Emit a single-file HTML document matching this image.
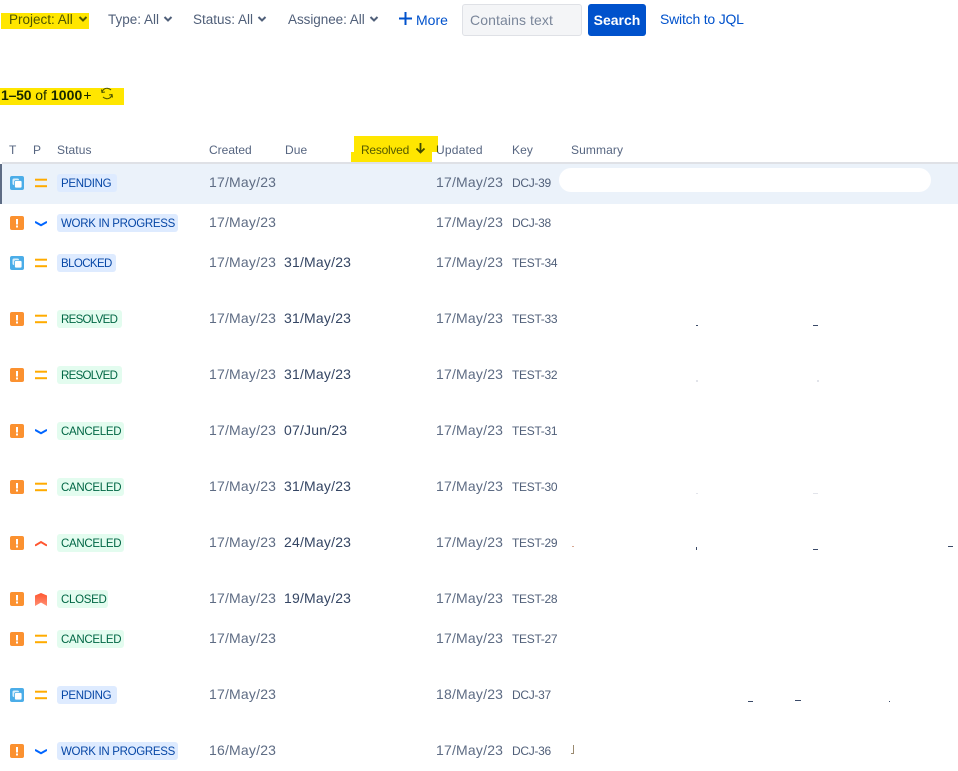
<!DOCTYPE html>
<html lang="en">
<head>
<meta charset="utf-8">
<title>Issues</title>
<style>
html,body{margin:0;padding:0;background:#fff}
body{position:relative;width:958px;height:765px;overflow:hidden;font-family:"Liberation Sans",sans-serif;font-size:14px;color:#172b4d}
.a{position:absolute;white-space:nowrap}
.f{font-size:13.5px;line-height:20px;top:10px;color:#505f79}
.chev{position:absolute;top:15px;width:10px;height:8px}
.th{position:absolute;top:142px;font-size:12px;line-height:16px;color:#566580;white-space:nowrap;letter-spacing:.1px}
.row{position:absolute;left:0;width:958px;height:40px}
.row svg{position:absolute}
.ty{left:10px;top:13px;width:14px;height:14px}
.pr{left:35px;top:14px;width:12px;height:14px}
.b{position:absolute;left:57px;top:11px;height:18px;line-height:20px;border-radius:3px;font-size:11.5px;padding:0 4px;white-space:nowrap;box-sizing:border-box;letter-spacing:-.3px}
.bl{background:#deebff;color:#0747a6}
.gr{background:#e3fcef;color:#006644}
.d{position:absolute;top:9px;line-height:20px;font-size:14px;color:#5e6c84;white-space:nowrap;letter-spacing:.2px}
.cr{left:209px}
.du{left:284px;color:#344563}
.up{left:436px}
.k{position:absolute;left:512px;top:10px;line-height:20px;font-size:12px;color:#505f79;white-space:nowrap;letter-spacing:-.3px}
.s{position:absolute;background:#3a4a68}
.hl{position:absolute;background:#ffe600;mix-blend-mode:multiply}
</style>
</head>
<body>
<svg width="0" height="0" style="position:absolute">
<defs>
<linearGradient id="tg" x1="0" y1="0" x2="0" y2="1"><stop offset="0" stop-color="#ff5630"/><stop offset="1" stop-color="#ff8f73"/></linearGradient>
<symbol id="story" viewBox="0 0 14 14"><rect width="14" height="14" rx="2" fill="#4bade8"/><rect x="2.500" y="2.500" width="6.500" height="6.500" rx="1.500" fill="#d8effb"/><rect x="4.500" y="4.500" width="7.500" height="7.500" rx="1.500" fill="#fff" stroke="#4bade8" stroke-width=".8"/></symbol>
<symbol id="bug" viewBox="0 0 14 14"><rect width="14" height="14" rx="2" fill="#fb9130"/><rect x="6" y="3" width="2" height="5.500" fill="#fff"/><rect x="6" y="9.500" width="2" height="2" fill="#fff"/></symbol>
<symbol id="med" viewBox="0 0 12 14"><rect y="1.700" width="12" height="2" fill="#ffab00"/><rect y="8.200" width="12" height="2" fill="#ffab00"/></symbol>
<symbol id="low" viewBox="0 0 12 14"><path d="M.7 5.200 6 8.200l5.300-3" fill="none" stroke="#0065ff" stroke-width="2" stroke-linecap="round"/></symbol>
<symbol id="high" viewBox="0 0 12 14"><path d="M.7 8.200 6 5l5.300 3.200" fill="none" stroke="#ff5630" stroke-width="2" stroke-linecap="round"/></symbol>
<symbol id="top" viewBox="0 1 12 14"><path d="M0 3.500 6 1l6 2.500V14L6 10.500 0 14Z" fill="url(#tg)"/></symbol>
</defs>
</svg>

<!-- filter bar -->
<span class="a f" style="left:9px">Project: All</span>
<svg class="chev" style="left:78px" viewBox="0 0 10 8"><path d="M1.500 2 5 5.500 8.500 2" fill="none" stroke="#505f79" stroke-width="2"/></svg>
<span class="a f" style="left:108px">Type: All</span>
<svg class="chev" style="left:163px" viewBox="0 0 10 8"><path d="M1.500 2 5 5.500 8.500 2" fill="none" stroke="#505f79" stroke-width="2"/></svg>
<span class="a f" style="left:193px">Status: All</span>
<svg class="chev" style="left:257px" viewBox="0 0 10 8"><path d="M1.500 2 5 5.500 8.500 2" fill="none" stroke="#505f79" stroke-width="2"/></svg>
<span class="a f" style="left:288px;letter-spacing:-.05px">Assignee: All</span>
<svg class="chev" style="left:369px" viewBox="0 0 10 8"><path d="M1.500 2 5 5.500 8.500 2" fill="none" stroke="#505f79" stroke-width="2"/></svg>
<svg class="a" style="left:399px;top:12px" width="13" height="13" viewBox="0 0 13 13"><path d="M6.500 0v13M0 6.500h13" stroke="#0052cc" stroke-width="2"/></svg>
<span class="a f" style="left:416px;color:#0052cc;font-size:14px">More</span>
<div class="a" style="left:462px;top:4px;width:120px;height:32px;box-sizing:border-box;background:#f4f5f7;border:1px solid #dfe1e6;border-radius:3px;line-height:30px;padding-left:7px;color:#7a869a;letter-spacing:.1px">Contains text</div>
<div class="a" style="left:588px;top:4px;width:58px;height:32px;background:#0052cc;border-radius:3px;color:#fff;font-weight:bold;text-align:center;line-height:32px">Search</div>
<span class="a f" style="left:660px;top:9px;color:#0052cc;font-size:14px;letter-spacing:-.2px">Switch to JQL</span>

<!-- count -->
<span class="a" style="left:1px;top:85px;line-height:20px;color:#172b4d"><b style="letter-spacing:-.2px">1–50</b> of <b style="letter-spacing:.1px">1000</b><span style="margin-left:1px">+</span></span>
<svg class="a" style="left:100px;top:87px" width="14" height="13" viewBox="0 0 14 13"><path d="M2 5.500C2.500 2.500 5 1 7.500 1.300 9 1.500 10 2 11 3M1.500 2.500l.500 3 3-.500M12 7.500c-.500 3-3 4.500-5.500 4.200C5 11.500 4 11 3 10M12.500 10.500l-.500-3-3 .500" fill="none" stroke="#505f79" stroke-width="1.100"/></svg>

<!-- table header -->
<span class="th" style="left:9px">T</span>
<span class="th" style="left:33px">P</span>
<span class="th" style="left:57px">Status</span>
<span class="th" style="left:209px;letter-spacing:0">Created</span>
<span class="th" style="left:285px">Due</span>
<span class="th" style="left:361px;letter-spacing:-.25px">Resolved</span>
<svg class="a" style="left:415px;top:142px" width="11" height="12" viewBox="0 0 11 12"><path d="M5.500 1v9M1.500 6.500l4 4 4-4" fill="none" stroke="#42526e" stroke-width="1.800"/></svg>
<span class="th" style="left:436px;letter-spacing:.2px">Updated</span>
<span class="th" style="left:512px">Key</span>
<span class="th" style="left:571px">Summary</span>
<div class="a" style="left:2px;top:162px;width:956px;height:2px;background:#dfe1e6"></div>

<!-- row 1 selected -->
<div class="a" style="left:0;top:164px;width:958px;height:40px;background:#ebf2fa"></div>
<div class="a" style="left:0;top:164px;width:2px;height:40px;background:#5e6c84"></div>
<div class="a" style="left:559px;top:168px;width:372px;height:24px;background:#fff;border-radius:12px"></div>

<div class="row" style="top:163px"><svg class="ty"><use href="#story"/></svg><svg class="pr"><use href="#med"/></svg><span class="b bl" style="width:60px">PENDING</span><span class="d cr">17/May/23</span><span class="d up">17/May/23</span><span class="k">DCJ-39</span></div>
<div class="row" style="top:203px"><svg class="ty"><use href="#bug"/></svg><svg class="pr"><use href="#low"/></svg><span class="b bl" style="width:121px">WORK IN PROGRESS</span><span class="d cr">17/May/23</span><span class="d up">17/May/23</span><span class="k">DCJ-38</span></div>
<div class="row" style="top:243px"><svg class="ty"><use href="#story"/></svg><svg class="pr"><use href="#med"/></svg><span class="b bl" style="width:59px;letter-spacing:-.6px">BLOCKED</span><span class="d cr">17/May/23</span><span class="d du">31/May/23</span><span class="d up">17/May/23</span><span class="k">TEST-34</span></div>
<div class="row" style="top:299px"><svg class="ty"><use href="#bug"/></svg><svg class="pr"><use href="#med"/></svg><span class="b gr" style="width:65px;letter-spacing:-.7px">RESOLVED</span><span class="d cr">17/May/23</span><span class="d du">31/May/23</span><span class="d up">17/May/23</span><span class="k">TEST-33</span></div>
<div class="row" style="top:355px"><svg class="ty"><use href="#bug"/></svg><svg class="pr"><use href="#med"/></svg><span class="b gr" style="width:65px;letter-spacing:-.7px">RESOLVED</span><span class="d cr">17/May/23</span><span class="d du">31/May/23</span><span class="d up">17/May/23</span><span class="k">TEST-32</span></div>
<div class="row" style="top:411px"><svg class="ty"><use href="#bug"/></svg><svg class="pr"><use href="#low"/></svg><span class="b gr" style="width:67px">CANCELED</span><span class="d cr">17/May/23</span><span class="d du">07/Jun/23</span><span class="d up">17/May/23</span><span class="k">TEST-31</span></div>
<div class="row" style="top:467px"><svg class="ty"><use href="#bug"/></svg><svg class="pr"><use href="#med"/></svg><span class="b gr" style="width:67px">CANCELED</span><span class="d cr">17/May/23</span><span class="d du">31/May/23</span><span class="d up">17/May/23</span><span class="k">TEST-30</span></div>
<div class="row" style="top:523px"><svg class="ty"><use href="#bug"/></svg><svg class="pr"><use href="#high"/></svg><span class="b gr" style="width:67px">CANCELED</span><span class="d cr">17/May/23</span><span class="d du">24/May/23</span><span class="d up">17/May/23</span><span class="k">TEST-29</span></div>
<div class="row" style="top:579px"><svg class="ty"><use href="#bug"/></svg><svg class="pr"><use href="#top"/></svg><span class="b gr" style="width:51px">CLOSED</span><span class="d cr">17/May/23</span><span class="d du">19/May/23</span><span class="d up">17/May/23</span><span class="k">TEST-28</span></div>
<div class="row" style="top:619px"><svg class="ty"><use href="#bug"/></svg><svg class="pr"><use href="#med"/></svg><span class="b gr" style="width:67px">CANCELED</span><span class="d cr">17/May/23</span><span class="d up">17/May/23</span><span class="k">TEST-27</span></div>
<div class="row" style="top:675px"><svg class="ty"><use href="#story"/></svg><svg class="pr"><use href="#med"/></svg><span class="b bl" style="width:60px">PENDING</span><span class="d cr">17/May/23</span><span class="d up">18/May/23</span><span class="k">DCJ-37</span></div>
<div class="row" style="top:731px"><svg class="ty"><use href="#bug"/></svg><svg class="pr"><use href="#low"/></svg><span class="b bl" style="width:121px">WORK IN PROGRESS</span><span class="d cr">16/May/23</span><span class="d up">17/May/23</span><span class="k">DCJ-36</span></div>

<!-- residual marks in summary column -->
<div class="s" style="left:696px;top:325px;width:2px;height:1px"></div>
<div class="s" style="left:813px;top:325px;width:5px;height:1px"></div>
<div class="s" style="left:696px;top:380px;width:2px;height:2px;background:#e2e4ea"></div>
<div class="s" style="left:817px;top:380px;width:2px;height:2px;background:#e2e4ea"></div>
<div class="s" style="left:696px;top:493px;width:2px;height:1px;background:#e2e4ea"></div>
<div class="s" style="left:813px;top:493px;width:5px;height:1px;background:#e2e4ea"></div>
<div class="s" style="left:572px;top:546px;width:2px;height:1px;background:#d8a893"></div>
<div class="s" style="left:696px;top:547px;width:1px;height:3px"></div>
<div class="s" style="left:813px;top:549px;width:5px;height:1px"></div>
<div class="s" style="left:948px;top:546px;width:5px;height:1px"></div>
<div class="s" style="left:748px;top:701px;width:5px;height:1px"></div>
<div class="s" style="left:795px;top:700px;width:6px;height:1px"></div>
<div class="s" style="left:889px;top:701px;width:1px;height:1px"></div>
<div class="s" style="left:573px;top:745px;width:1px;height:9px;background:#9a8a70"></div>
<div class="s" style="left:571px;top:753px;width:3px;height:1px;background:#9a8a70"></div>

<!-- highlighter marks -->
<div class="hl" style="left:1px;top:13px;width:88px;height:16px"></div>
<div class="hl" style="left:0;top:88px;width:124px;height:17px"></div>
<div class="hl" style="left:354px;top:136px;width:84px;height:16px"></div>
<div class="hl" style="left:351px;top:152px;width:81px;height:10px"></div>
</body>
</html>
